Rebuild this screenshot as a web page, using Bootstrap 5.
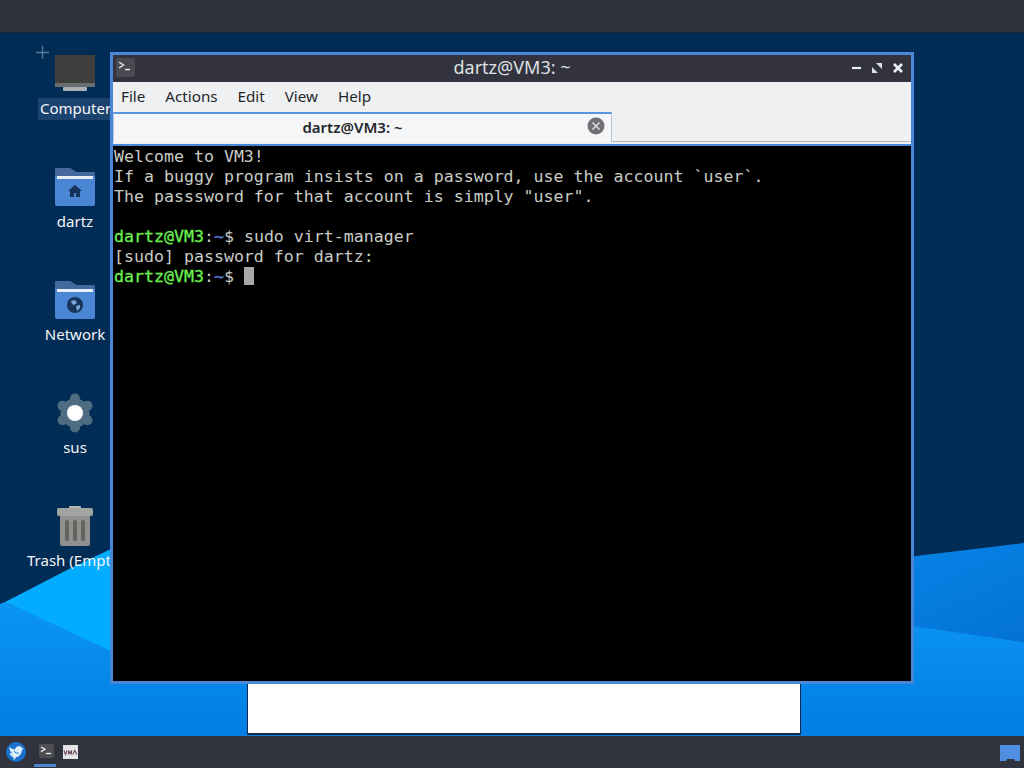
<!DOCTYPE html>
<html lang="en">
<head>
<meta charset="utf-8">
<title>dartz@VM3</title>
<link href="https://cdn.jsdelivr.net/npm/bootstrap@5.3.0/dist/css/bootstrap.min.css" rel="stylesheet">
<style>
html,body{margin:0;height:100%;overflow:hidden}
body{font-family:"Noto Sans","Open Sans",sans-serif;background:#012c56}
.screen{width:1024px;height:768px;position:relative;overflow:hidden}
.wall{position:absolute;inset:0;width:1024px;height:768px}
.topbar{height:33px;background:#2f313c;border-bottom:1px solid #1c2b45;position:relative}
.taskbar{position:absolute;left:0;right:0;top:736px;height:32px;background:#30323d}
.startbtn{position:absolute;left:6px;top:6px}
.task-term{position:absolute;left:39px;top:8px}
.task-under{position:absolute;left:34px;top:28px;width:22px;height:3px;background:#4b87d3}
.task-vm{position:absolute;left:63px;top:9px}
.tray{position:absolute;left:1000px;top:9px}
.dicon{position:absolute;left:0;width:150px;color:#f4f6f8;font-size:15px;line-height:20px;white-space:nowrap}
.dicon svg{display:block;margin-left:55px}
.dlabel{width:150px;text-align:center;margin-top:5px}
.plus{position:absolute;left:35px;top:45px}
.hlabel{background:#1c426e;margin-left:38px;margin-top:5px;padding-left:2px;width:80px;height:22px;line-height:20px}
.whitebox{position:absolute;left:247px;top:684px;width:554px;height:51px;background:#fff;border-left:1px solid #12294a;border-right:1px solid #12294a;border-bottom:2px solid #12294a}
.win{position:absolute;left:110px;top:52px;width:804px;height:632px;border:3px solid #4a86d8;background:#eff0f1}
.wtitle{height:27px;background:#32333e;color:#dfe1e4;font-size:18px;line-height:25px;padding-bottom:2px;position:relative;flex:none}
.wtitle-ic{position:absolute;left:3px;top:3px}
.wctl{position:absolute;right:6px;top:6px}
.wmenu{height:30px;font-size:15.2px;line-height:20px;color:#232629;padding:0 0 3px 8px;gap:20px;flex:none}
.wtabs{height:30px;border-bottom:1px solid #b4b6b8;flex:none}
.wtab{width:499px;height:30px;border:1px solid #b9c4d4;border-top:2px solid #5a94dc;border-bottom:0;font-size:15px;line-height:20px;font-weight:600;color:#232629;position:relative;padding:0 20px 3px 0;background:#f4f6f8}
.wtab-x{position:absolute;right:6px;top:3px}
.wsep{height:4px;border-bottom:2px solid #4a86d8;flex:none}
.term{flex:1 1 auto;background:#000;font-family:"DejaVu Sans Mono",monospace;font-size:16.6px;line-height:20px;color:#c9ccc6;padding:1px 0 0 1px;overflow:hidden}
.tline{height:20px;white-space:pre}
.tg{color:#6af04f;-webkit-text-stroke:.3px #6af04f}
.tb{color:#5a7bd8;-webkit-text-stroke:.3px #5a7bd8}
.cursor{display:inline-block;width:10px;height:18px;background:#a9a9a9;vertical-align:-3px}
</style>
</head>
<body>
<div class="screen">
  <svg class="wall" viewBox="0 0 1024 768">
    <defs>
      <linearGradient id="g1" x1="0" y1="0" x2="0" y2="1"><stop offset="0" stop-color="#0a95f5"/><stop offset="1" stop-color="#0078df"/></linearGradient>
      <linearGradient id="g2" x1="0" y1="0" x2="1" y2="1"><stop offset="0" stop-color="#0888ea"/><stop offset="1" stop-color="#0472d6"/></linearGradient>
    </defs>
    <rect width="1024" height="768" fill="#012c56"/>
    <polygon points="0,604 0,768 1024,768 1024,642 914,625 400,650 110,650 5,602" fill="url(#g1)"/>
    <polygon points="5,602 75,566 130,540 130,660" fill="#04acff"/>
    <polygon points="800,570 1024,543 1024,642 800,610" fill="url(#g2)"/>
  </svg>
  <div class="topbar"></div>

  <svg class="plus" width="15" height="15" viewBox="0 0 15 15"><path d="M7.500 1v13M1 7.500h13" stroke="#5b7896" stroke-width="1.400" fill="none"/></svg>

  <div class="dicon" style="top:55px">
    <svg width="40" height="38" viewBox="0 0 40 38"><rect x="0" y="0" width="40" height="29" fill="#3e3f3d"/><rect x="0" y="28" width="40" height="4" fill="#6a6d70"/><rect x="8" y="32" width="24" height="4" rx="1" fill="#a8aeb4"/></svg>
    <div class="hlabel">Computer</div>
  </div>
  <div class="dicon" style="top:168px">
    <svg width="40" height="38" viewBox="0 0 40 38"><path d="M0 2q0-2 2-2h13l6 4h17q2 0 2 2v30q0 2-2 2H2q-2 0-2-2z" fill="#4a86d4"/><path d="M0 2q0-2 2-2h13l6 4h17q2 0 2 2v2H0z" fill="#45699c"/><rect x="2" y="8" width="36" height="3" fill="#e6eef8"/><path d="M20 17l-7 6h2v6h4v-4h2v4h4v-6h2z" fill="#16345a"/></svg>
    <div class="dlabel">dartz</div>
  </div>
  <div class="dicon" style="top:281px">
    <svg width="40" height="38" viewBox="0 0 40 38"><path d="M0 2q0-2 2-2h13l6 4h17q2 0 2 2v30q0 2-2 2H2q-2 0-2-2z" fill="#4a86d4"/><path d="M0 2q0-2 2-2h13l6 4h17q2 0 2 2v2H0z" fill="#45699c"/><rect x="2" y="8" width="36" height="3" fill="#e6eef8"/><circle cx="20" cy="24" r="8" fill="#16345a"/><path d="M16 20l4-1 2 3-3 2-2-1zM21 25l4-1 0 3-3 3z" fill="#7da7d8"/></svg>
    <div class="dlabel">Network</div>
  </div>
  <div class="dicon" style="top:393px">
    <svg width="40" height="40" viewBox="0 0 40 40"><g fill="#4f6d82"><circle cx="20" cy="20" r="14.500"/><circle cx="20" cy="5.500" r="5"/><circle cx="20" cy="34.500" r="5"/><circle cx="7.500" cy="12.700" r="5"/><circle cx="32.500" cy="12.700" r="5"/><circle cx="7.500" cy="27.300" r="5"/><circle cx="32.500" cy="27.300" r="5"/></g><circle cx="20" cy="20" r="8" fill="#fff"/></svg>
    <div class="dlabel" style="margin-top:4px">sus</div>
  </div>
  <div class="dicon" style="top:506px">
    <svg width="36" height="40" viewBox="0 0 36 40" style="margin-left:57px"><rect x="12" y="0" width="12" height="4" rx="1" fill="#b4b6b4"/><rect x="0" y="2" width="36" height="8" rx="2" fill="#a2a4a2"/><path d="M3 10h30v28q0 2-2 2H5q-2 0-2-2z" fill="#8f918f"/><rect x="8" y="14" width="4" height="21" rx="2" fill="#62645f"/><rect x="16" y="14" width="4" height="21" rx="2" fill="#62645f"/><rect x="24" y="14" width="4" height="21" rx="2" fill="#62645f"/></svg>
    <div class="dlabel" style="margin-top:4px">Trash (Empty)</div>
  </div>

  <div class="whitebox"></div>

  <div class="win d-flex flex-column">
    <div class="wtitle d-flex align-items-center justify-content-center">
      <svg class="wtitle-ic" width="19" height="19" viewBox="0 0 19 19"><rect width="19" height="19" rx="2" fill="#4a4b50"/><path d="M3 4l4.500 3L3 10" fill="none" stroke="#e8e8e8" stroke-width="1.400"/><path d="M9 11.500h5" stroke="#e8e8e8" stroke-width="1.400"/></svg>
      <span>dartz@VM3: ~</span>
      <svg class="wctl" width="53" height="14" viewBox="0 0 53 14"><path d="M0 7h9" stroke="#eceff4" stroke-width="2.200"/><path d="M20 12V6l6 6zM30 2v6l-6-6z" fill="#dfe3ea"/><path d="M42 3l8 8M50 3l-8 8" stroke="#eceff4" stroke-width="2.600"/></svg>
    </div>
    <div class="wmenu d-flex align-items-center"><span>File</span><span>Actions</span><span>Edit</span><span>View</span><span>Help</span></div>
    <div class="wtabs">
      <div class="wtab d-flex align-items-center justify-content-center">dartz@VM3: ~
        <svg class="wtab-x" width="18" height="18" viewBox="0 0 18 18"><circle cx="9" cy="9" r="8.500" fill="#6e7073"/><path d="M5.500 5.500l7 7M12.500 5.500l-7 7" stroke="#e6e6e6" stroke-width="1.400"/></svg>
      </div>
    </div>
    <div class="wsep"></div>
    <div class="term">
      <div class="tline">Welcome to VM3!</div>
      <div class="tline">If a buggy program insists on a password, use the account `user`.</div>
      <div class="tline">The passsword for that account is simply "user".</div>
      <div class="tline"></div>
      <div class="tline"><span class="tg">dartz@VM3</span><span>:</span><span class="tb">~</span><span>$ sudo virt-manager</span></div>
      <div class="tline">[sudo] password for dartz:</div>
      <div class="tline"><span class="tg">dartz@VM3</span><span>:</span><span class="tb">~</span><span>$ </span><span class="cursor"></span></div>
    </div>
  </div>

  <div class="taskbar">
    <svg class="startbtn" width="20" height="20" viewBox="0 0 20 20"><circle cx="10" cy="10" r="10" fill="#1a6fca"/><path d="M3 5c2 1.500 4 2.500 6 2.500 .5-2 2-3.500 4-3.500 1.500 0 2.500 1 3 2l2 1-2 .8c-.3 4-2.500 7-6 7.500l-2 3-.8-3.300C5.500 14.500 4 13 3.500 11l3 .5C4.500 10 3.300 7.500 3 5z" fill="#dceefa"/><path d="M8 9c1 2 3 2.500 5 2" fill="none" stroke="#1a6fca" stroke-width="1"/></svg>
    <svg class="task-term" width="15" height="14" viewBox="0 0 15 14"><rect width="15" height="14" rx="2" fill="#4e4f53"/><path d="M2 3l4 2.300-4 2.300" fill="none" stroke="#eee" stroke-width="1.300"/><path d="M7 9.500h5" stroke="#eee" stroke-width="1.300"/></svg>
    <div class="task-under"></div>
    <svg class="task-vm" width="15" height="14" viewBox="0 0 15 14"><rect width="15" height="14" fill="#e4e4e6"/><path d="M1 5.500l1.500 4 1.500-4M5.500 9.500v-4l1.500 3 1.500-3v4M9.800 9.500l2-4 2 4" fill="none" stroke="#6a4a55" stroke-width="1.100"/></svg>
    <svg class="tray" width="21" height="17" viewBox="0 0 21 17"><path d="M0 0h20v16h-5l-1-2H7l-1 2H0z" fill="#4f8ee0"/></svg>
  </div>
</div>
<script src="https://cdn.jsdelivr.net/npm/bootstrap@5.3.0/dist/js/bootstrap.bundle.min.js"></script>
</body>
</html>
